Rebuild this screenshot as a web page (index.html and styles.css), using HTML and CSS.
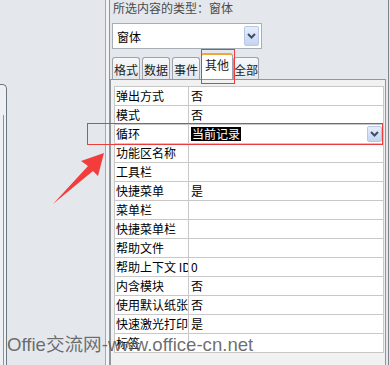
FILE: index.html
```html
<!DOCTYPE html>
<html>
  <head>
    <title>属性表</title>
    <link rel="stylesheet" href="styles.css">
  </head>
  <body>
    <div class="app">
      <div class="left-pane">
        <div class="frame">
          <div class="frame-inner"></div>
        </div>
      </div>
      <div class="divider"></div>
      <div class="prop-pane">
        <div class="sel-type">所选内容的类型：窗体</div>
        <div class="combo">
          <span class="combo-text">窗体</span>
          <span class="drop-btn">
            <svg width="9" height="6" viewBox="0 0 9 6"><path d="M1 1 L4.5 4.5 L8 1" fill="none" stroke="#3d4d6d" stroke-width="2"/></svg>
          </span>
        </div>
        <div class="tabs">
          <div class="tab">格式</div>
          <div class="tab">数据</div>
          <div class="tab">事件</div>
          <div class="tab active">其他</div>
          <div class="tab last">全部</div>
        </div>
        <div class="sheet">
          <table class="grid">
            <tr><td class="name">弹出方式</td><td class="val">否</td></tr>
            <tr><td class="name">模式</td><td class="val">否</td></tr>
            <tr class="current">
              <td class="name">循环</td>
              <td class="val">
                <div class="val-row">
                  <span class="picked">当前记录</span>
                  <span class="drop-btn small">
                    <svg width="9" height="6" viewBox="0 0 9 6"><path d="M1 1 L4.5 4.5 L8 1" fill="none" stroke="#3d4d6d" stroke-width="2"/></svg>
                  </span>
                </div>
              </td>
            </tr>
            <tr><td class="name">功能区名称</td><td class="val"></td></tr>
            <tr><td class="name">工具栏</td><td class="val"></td></tr>
            <tr><td class="name">快捷菜单</td><td class="val">是</td></tr>
            <tr><td class="name">菜单栏</td><td class="val"></td></tr>
            <tr><td class="name">快捷菜单栏</td><td class="val"></td></tr>
            <tr><td class="name">帮助文件</td><td class="val"></td></tr>
            <tr><td class="name">帮助上下文 ID</td><td class="val">0</td></tr>
            <tr><td class="name">内含模块</td><td class="val">否</td></tr>
            <tr><td class="name">使用默认纸张</td><td class="val">否</td></tr>
            <tr><td class="name">快速激光打印</td><td class="val">是</td></tr>
            <tr><td class="name">标签</td><td class="val"></td></tr>
          </table>
        </div>
      </div>

      <!-- annotations drawn over the screenshot -->
      <div class="mark mark-tab"></div>
      <div class="mark mark-row"></div>
      <svg class="arrow" width="390" height="365" viewBox="0 0 390 365">
        <polygon points="104,153 81,161 88,166 53,204 93,171 98,176" fill="#f23d3d"/>
      </svg>
      <div class="watermark">Offie交流网-www.office-cn.net</div>
    </div>
  </body>
</html>
```

FILE: styles.css
```css
body {
  margin: 0;
  background-color: #e4e8ed;
  font-family: "Noto Sans CJK SC", "Liberation Sans", sans-serif;
  font-size: 12px;
  color: #000;
}
.app {
  position: relative;
  display: flex;
  width: 390px;
  height: 365px;
  overflow: hidden;
}
.left-pane {
  width: 105px;
  padding-top: 84px;
  box-sizing: border-box;
}
.frame {
  width: 7px;
  height: 281px;
  box-sizing: border-box;
  border-top: 1px solid #6e7680;
  border-right: 1px solid #6e7680;
  border-top-right-radius: 5px;
  background-color: #eef0f3;
}
.frame-inner {
  width: 3px;
  height: 250px;
  margin-top: 30px;
  border-right: 1px solid #8a929c;
}
.divider {
  width: 5px;
  box-sizing: border-box;
  border-left: 1px solid #a3a9b0;
  border-right: 1px solid #8d949c;
  background-color: #f1f3f5;
}
.prop-pane {
  width: 279px;
  box-sizing: border-box;
  border-right: 1px solid #7d848c;
}
.sel-type {
  height: 23px;
  padding-left: 3px;
  line-height: 16px;
  color: #4a4a4a;
}
.combo {
  display: flex;
  align-items: center;
  justify-content: space-between;
  width: 150px;
  height: 26px;
  margin-left: 2px;
  box-sizing: border-box;
  border: 1px solid #a6aeb8;
  background-color: #fff;
}
.combo-text {
  padding-left: 4px;
}
.drop-btn {
  display: flex;
  align-items: center;
  justify-content: center;
  width: 15px;
  height: 20px;
  margin-right: 2px;
  box-sizing: border-box;
  border: 1px solid #b8c8e4;
  border-radius: 2px;
  background: linear-gradient(#e6eefa, #c4d5ef);
}
.drop-btn.small {
  height: 16px;
  margin-right: 1px;
}
.tabs {
  display: flex;
  align-items: flex-end;
  gap: 2px;
  height: 29px;
  margin-top: 1px;
  padding-left: 2px;
}
.tab {
  width: 28px;
  height: 22px;
  box-sizing: border-box;
  border: 1px solid #9ba4ae;
  border-bottom: none;
  border-radius: 3px 3px 0 0;
  background: linear-gradient(#f6f8fa, #e3e7ec);
  text-align: center;
  line-height: 23px;
  color: #222;
}
.tab.active {
  width: 32px;
  height: 26px;
  margin-left: -1px;
  margin-right: -2px;
  border-top: 2px solid #f2a43a;
  background: #fff;
  line-height: 20px;
}
.tab.last {
  width: 26px;
}
.sheet {
  width: 276px;
  height: 290px;
  box-sizing: border-box;
  padding: 6px 0 0 3px;
  border: 1px solid #8f969e;
  border-bottom: none;
  background-color: #f1f1f1;
}
.grid {
  width: 270px;
  border-collapse: collapse;
  table-layout: fixed;
  background-color: #fff;
}
.grid td {
  height: 18px;
  padding: 0;
  border: 1px solid #c8c8c8;
  white-space: nowrap;
  overflow: hidden;
  line-height: 18px;
}
.grid td.name {
  width: 72px;
  padding-left: 1px;
}
.grid td.val {
  padding-left: 2px;
}
.val-row {
  display: flex;
  align-items: center;
  justify-content: space-between;
}
.picked {
  background-color: #000;
  color: #fff;
  line-height: 14px;
  padding: 0 1px;
}
.mark {
  position: absolute;
  border: 1.5px solid #ec3b3b;
  box-sizing: border-box;
}
.mark-tab {
  left: 201px;
  top: 49px;
  width: 34px;
  height: 35px;
}
.mark-row {
  left: 87px;
  top: 123px;
  width: 296px;
  height: 22px;
}
.arrow {
  position: absolute;
  left: 0;
  top: 0;
}
.watermark {
  position: absolute;
  left: 7px;
  top: 333px;
  font-family: "Liberation Sans", "Noto Sans CJK SC", sans-serif;
  font-size: 18.6px;
  line-height: 24px;
  color: rgba(85, 85, 85, 0.85);
  white-space: nowrap;
}
```
